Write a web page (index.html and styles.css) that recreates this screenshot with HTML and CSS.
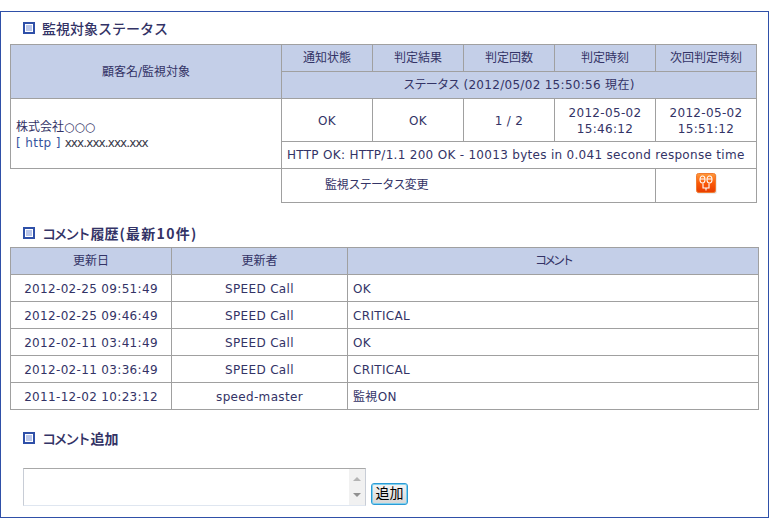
FILE: index.html
```html
<!DOCTYPE html>
<html lang="ja">
<head>
<meta charset="utf-8">
<title>監視対象ステータス</title>
<link rel="stylesheet" href="styles.css">
</head>
<body>
<main class="panel">
  <h2 class="heading heading-first"><span class="bullet"></span>監視対象ステータス</h2>
  <table class="grid status">
    <colgroup><col class="c1"><col class="c2"><col class="c3"><col class="c4"><col class="c5"><col class="c6"></colgroup>
    <tr class="r-head">
      <th rowspan="2">顧客名/監視対象</th>
      <th>通知状態</th><th>判定結果</th><th>判定回数</th><th>判定時刻</th><th>次回判定時刻</th>
    </tr>
    <tr class="r-head"><th colspan="5" class="status-line"><span class="kana-s">ステータス</span> (2012/05/02 15:50:56 現在)</th></tr>
    <tr class="r-data">
      <td rowspan="2" class="left customer">株式会社<span class="circles">○○○</span><br><a class="proto">[ http ]</a> <span class="addr">xxx.xxx.xxx.xxx</span></td>
      <td>OK</td><td>OK</td><td>1 / 2</td><td>2012-05-02<br>15:46:12</td><td>2012-05-02<br>15:51:12</td>
    </tr>
    <tr class="r-msg"><td colspan="5" class="left msg">HTTP OK: HTTP/1.1 200 OK - 10013 bytes in 0.041 second response time</td></tr>
    <tr class="r-change">
      <td class="blank"></td>
      <td colspan="4" class="change">監視<span class="kana-s">ステータス</span>変更</td>
      <td class="icon-cell">
        <svg class="plug" width="21" height="21" viewBox="0 0 21 21" role="img" aria-label="監視ステータス変更">
          <defs><linearGradient id="o" x1="0" y1="0" x2="0" y2="1"><stop offset="0" stop-color="#ff9a3c"/><stop offset=".5" stop-color="#fb5a08"/><stop offset="1" stop-color="#e83c00"/></linearGradient></defs>
          <rect x="1.500" y="1.500" width="19" height="19" rx="1" fill="#d9d9d9"/>
          <rect x=".5" y=".5" width="19" height="19" rx="2" fill="url(#o)" stroke="#f07a30"/>
          <g fill="none" stroke="#fff" stroke-width="1.1">
            <ellipse cx="6.500" cy="6.500" rx="2.500" ry="3.500"/>
            <ellipse cx="13.500" cy="6.500" rx="2.500" ry="3.500"/>
            <path d="M7 10.500v4.500h6v-4.500M10 15v2.500"/>
            <path d="M4 6h5M11 6h5"/>
          </g>
        </svg>
      </td>
    </tr>
  </table>

  <h2 class="heading heading-second"><span class="bullet"></span><span class="kana">コメント</span>履歴<span class="wide">(最新10件)</span></h2>
  <table class="grid history">
    <colgroup><col class="h1"><col class="h2"><col class="h3"></colgroup>
    <tr class="r-head"><th>更新日</th><th>更新者</th><th><span class="kana-m">コメント</span></th></tr>
    <tr class="r-row"><td>2012-02-25 09:51:49</td><td>SPEED Call</td><td class="left">OK</td></tr>
    <tr class="r-row"><td>2012-02-25 09:46:49</td><td>SPEED Call</td><td class="left">CRITICAL</td></tr>
    <tr class="r-row"><td>2012-02-11 03:41:49</td><td>SPEED Call</td><td class="left">OK</td></tr>
    <tr class="r-row"><td>2012-02-11 03:36:49</td><td>SPEED Call</td><td class="left">CRITICAL</td></tr>
    <tr class="r-row"><td>2011-12-02 10:23:12</td><td>speed-master</td><td class="left">監視ON</td></tr>
  </table>

  <h2 class="heading heading-third"><span class="bullet"></span><span class="kana">コメント</span>追加</h2>
  <form class="add">
    <div class="textbox">
      <div class="scroll"><span class="arrow up"></span><span class="arrow down"></span></div>
    </div>
    <button type="button" class="submit">追加</button>
  </form>
</main>
</body>
</html>
```
FILE: styles.css
```css
* { box-sizing: border-box; }
html, body { margin: 0; padding: 0; background: #fff; }
body {
  font-family: "DejaVu Sans", "Noto Sans CJK JP", sans-serif;
  font-size: 12px;
  color: #333366;
}
.panel {
  width: 769px;
  height: 507px;
  margin-top: 11px;
  border: 1px solid #2f50a8;
  padding: 0 9px;
}
.heading {
  display: flex;
  align-items: center;
  margin: 0;
  padding-left: 13px;
  height: 20px;
  font-size: 14px;
  font-weight: 700;
  font-family: "Noto Sans CJK JP", sans-serif;
  color: #333366;
}
.heading-first { margin-top: 6px; margin-bottom: 6px; font-weight: 500; }
.heading-second { margin-top: 20px; margin-bottom: 4px; }
.heading-third { margin-top: 18px; margin-bottom: 20px; }
.kana { letter-spacing: -2.400px; margin-right: 2px; font-weight: 500; }
.wide { letter-spacing: 1.300px; margin-left: 1px; }
.bullet {
  width: 12px;
  height: 12px;
  margin-right: 7px;
  border: 1px solid #2f50a8;
  outline: 1px solid #2f50a8;
  outline-offset: -2px;
  background: #b9c6ea;
  box-shadow: inset 0 0 0 2px #fff;
  flex: none;
}
.grid {
  border-collapse: collapse;
  table-layout: fixed;
}
.grid th, .grid td {
  border: 1px solid #a0a0a0;
  padding: 0;
  text-align: center;
  font-weight: 400;
  vertical-align: middle;
  line-height: 16px;
}
.grid td { letter-spacing: .33px; padding-top: 2px; }
.grid th {
  background: #c4cfe8;
  font-family: "DejaVu Sans", "Noto Sans CJK JP", sans-serif;
  font-size: 12px;
}
.status-line { letter-spacing: .3px; }
.kana-s { letter-spacing: -.8px; }
.kana-m { letter-spacing: -3px; }
.grid td.left { text-align: left; padding-left: 5px; }
.status { width: 746px; }
.status .c1 { width: 271px; }
.status .c2, .status .c3, .status .c4 { width: 91px; }
.status .c5, .status .c6 { width: 101px; }
.status tr:nth-child(1), .status tr:nth-child(2) { height: 27px; }
.status tr:nth-child(3) { height: 43px; }
.status tr:nth-child(4) { height: 27px; }
.status tr:nth-child(5) { height: 34px; }
.grid td.msg { padding-top: 0; letter-spacing: .3px; }
.grid td.customer { line-height: 16px; padding-top: 3px; letter-spacing: 0; }
.circles { letter-spacing: -.1px; }
.proto { color: #35539e; letter-spacing: .4px; }
.addr { font-size: 12px; letter-spacing: -.9px; color: #3a3a4a; }
.grid td.blank { border-left: 0; border-bottom: 0; }
.grid td.change { text-align: left; padding: 0 0 2px 43px; letter-spacing: -.2px; }
.grid td.icon-cell { padding: 0 0 5px; }
.plug { display: block; margin: 0 auto; }
.history { width: 748px; }
.history .h1 { width: 161px; }
.history .h2 { width: 176px; }
.history .h3 { width: 411px; }
.history tr { height: 27px; }
.add {
  display: flex;
  align-items: flex-end;
  gap: 5px;
  padding-left: 13px;
}
.textbox {
  position: relative;
  width: 343px;
  height: 38px;
  border: 1px solid #c8cdd6;
  border-top-color: #a8a8a8;
  border-bottom-color: #dfe6f0;
  background: #fff;
}
.scroll {
  position: absolute;
  top: 0;
  right: 0;
  bottom: 0;
  width: 16px;
  background: #f1f1f1;
  display: flex;
  flex-direction: column;
  justify-content: space-between;
  align-items: center;
  padding: 8px 0;
}
.arrow { width: 0; height: 0; border-left: 4px solid transparent; border-right: 4px solid transparent; }
.arrow.up { border-bottom: 4px solid #b4b4b4; }
.arrow.down { border-top: 4px solid #909090; }
.submit {
  width: 37px;
  height: 22px;
  margin-bottom: 1px;
  padding: 0 0 4px;
  border: 1px solid #2b9bd6;
  box-shadow: inset 0 0 0 1px #7fd0ee;
  border-radius: 3px;
  background: linear-gradient(#f4f4f4, #d6d6d6);
  font-family: "Noto Sans CJK JP", sans-serif;
  font-size: 14px;
  line-height: 14px;
  color: #000;
}
```
